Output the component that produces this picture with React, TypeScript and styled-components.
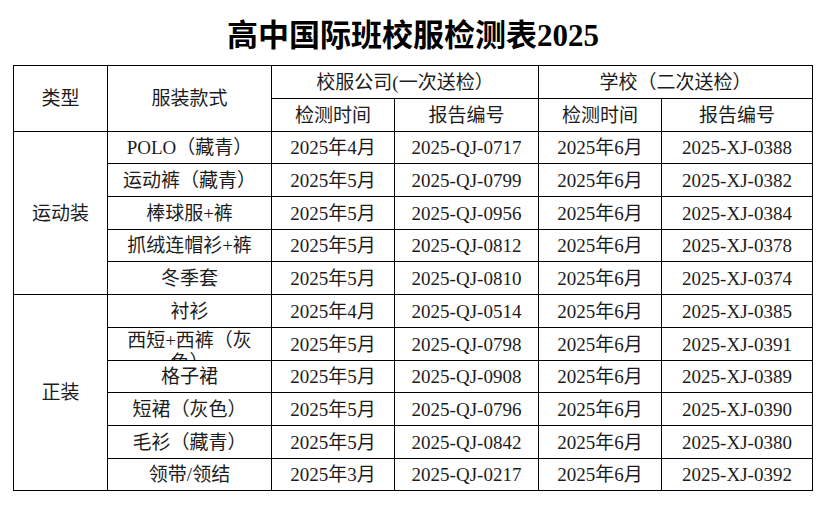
import React from "react";
import styled, { createGlobalStyle } from "styled-components";

interface Item {
  name: string;
  date1: string;
  code1: string;
  code2: string;
}

interface Group {
  type: string;
  items: Item[];
}

const groups: Group[] = [
  {
    type: "运动装",
    items: [
      { name: "POLO（藏青）", date1: "2025年4月", code1: "2025-QJ-0717", code2: "2025-XJ-0388" },
      { name: "运动裤（藏青）", date1: "2025年5月", code1: "2025-QJ-0799", code2: "2025-XJ-0382" },
      { name: "棒球服+裤", date1: "2025年5月", code1: "2025-QJ-0956", code2: "2025-XJ-0384" },
      { name: "抓绒连帽衫+裤", date1: "2025年5月", code1: "2025-QJ-0812", code2: "2025-XJ-0378" },
      { name: "冬季套", date1: "2025年5月", code1: "2025-QJ-0810", code2: "2025-XJ-0374" },
    ],
  },
  {
    type: "正装",
    items: [
      { name: "衬衫", date1: "2025年4月", code1: "2025-QJ-0514", code2: "2025-XJ-0385" },
      { name: "西短+西裤（灰色）", date1: "2025年5月", code1: "2025-QJ-0798", code2: "2025-XJ-0391" },
      { name: "格子裙", date1: "2025年5月", code1: "2025-QJ-0908", code2: "2025-XJ-0389" },
      { name: "短裙（灰色）", date1: "2025年5月", code1: "2025-QJ-0796", code2: "2025-XJ-0390" },
      { name: "毛衫（藏青）", date1: "2025年5月", code1: "2025-QJ-0842", code2: "2025-XJ-0380" },
      { name: "领带/领结", date1: "2025年3月", code1: "2025-QJ-0217", code2: "2025-XJ-0392" },
    ],
  },
];

const SCHOOL_DATE = "2025年6月";

const App = (): JSX.Element => {
  const renderGroups = (): JSX.Element[] =>
    groups.map(group => (
      <React.Fragment key={group.type}>
        <Cell $rows={group.items.length}>{group.type}</Cell>
        {group.items.map(item => (
          <React.Fragment key={item.code1}>
            {/* long names wrap and get clipped by the row, like the sheet does */}
            <Cell $wrap={item.name.length > 8}>{item.name}</Cell>
            <Cell>{item.date1}</Cell>
            <Cell>{item.code1}</Cell>
            <Cell>{SCHOOL_DATE}</Cell>
            <Cell>{item.code2}</Cell>
          </React.Fragment>
        ))}
      </React.Fragment>
    ));

  return (
    <Page>
      <GlobalStyle />
      <Title>高中国际班校服检测表2025</Title>
      <Sheet>
        <Cell $rows={2}>类型</Cell>
        <Cell $rows={2}>服装款式</Cell>
        <Cell $cols={2}>校服公司(一次送检）</Cell>
        <Cell $cols={2}>学校（二次送检）</Cell>
        <Cell>检测时间</Cell>
        <Cell>报告编号</Cell>
        <Cell>检测时间</Cell>
        <Cell>报告编号</Cell>
        {renderGroups()}
      </Sheet>
    </Page>
  );
};

const GlobalStyle = createGlobalStyle`
  html, body {
    margin: 0;
    padding: 0;
    background: #ffffff;
  }
  body {
    font-family: "Liberation Serif", "Noto Sans CJK SC", serif;
    color: #1c1c1c;
  }
`;

const Page = styled.div`
  width: 828px;
  height: 508px;
  padding: 0 15px 0 13px;
  box-sizing: border-box;
`;

const Title = styled.h1`
  margin: 0;
  height: 65px;
  padding-top: 20px;
  box-sizing: border-box;
  text-align: center;
  font-size: 31px;
  line-height: 31px;
  font-weight: bold;
  color: #000;
`;

const Sheet = styled.div`
  display: grid;
  grid-template-columns: 93px 163px 122px 143px 122px 150px;
  grid-template-rows: 32px 32px 31px 32px 32px 31px 32px 32px 32px 31px 32px 32px 31px;
  gap: 1px;
  padding: 1px;
  width: 800px;
  box-sizing: border-box;
  background: #000;
`;

const Cell = styled.div<{ $rows?: number; $cols?: number; $wrap?: boolean }>`
  grid-row: span ${p => p.$rows || 1};
  grid-column: span ${p => p.$cols || 1};
  background: #fff;
  display: flex;
  align-items: ${p => (p.$wrap ? "flex-start" : "center")};
  justify-content: center;
  text-align: center;
  padding: ${p => (p.$wrap ? "2px 8px 0" : "1px 4px 0")};
  font-size: 19px;
  line-height: 22px;
  overflow: hidden;
  white-space: ${p => (p.$wrap ? "normal" : "nowrap")};
`;

export default App;
